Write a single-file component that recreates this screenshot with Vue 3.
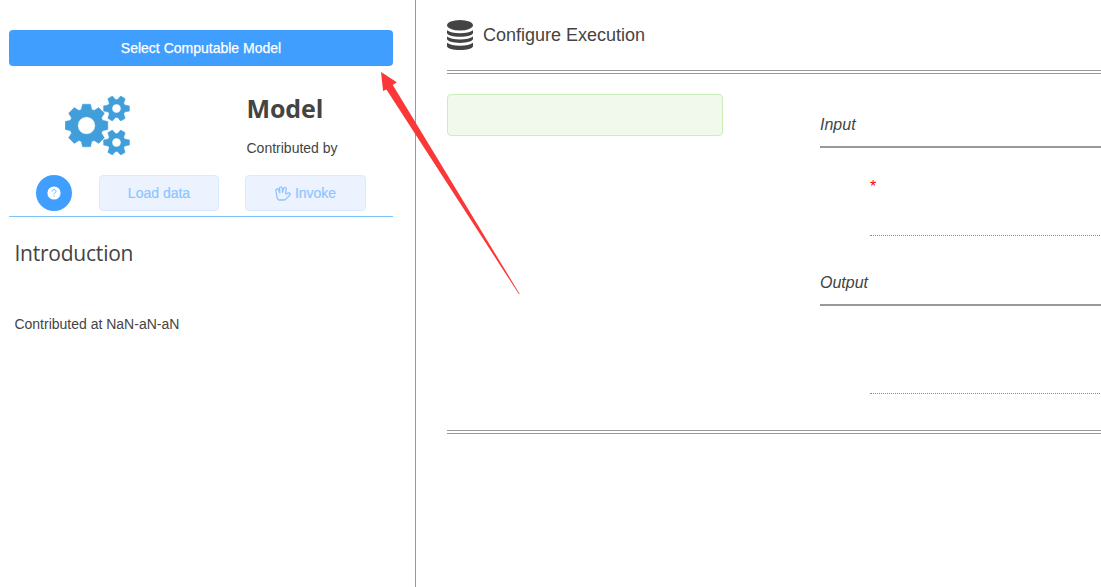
<script setup>
const gear = (cx, cy, teeth, outer, body, topHalf, baseHalf, hole) => {
  const points = []
  for (let i = 0; i < teeth; i++) {
    const a = (i * 2 * Math.PI) / teeth
    const c = Math.cos(a)
    const s = Math.sin(a)
    for (const [r, t] of [[body, -baseHalf], [outer, -topHalf], [outer, topHalf], [body, baseHalf]]) {
      points.push(`${(cx + r * c - t * s).toFixed(2)} ${(cy + r * s + t * c).toFixed(2)}`)
    }
  }
  return `M${points.join('L')}Z M${cx - hole} ${cy}a${hole} ${hole} 0 1 0 ${hole * 2} 0a${hole} ${hole} 0 1 0 ${-hole * 2} 0Z`
}
const gears = [
  gear(21.5, 29.5, 8, 21.3, 16, 4, 5.2, 8.8),
  gear(51.5, 12.5, 6, 12.9, 8.2, 2.6, 3.6, 4.5),
  gear(51.5, 46.5, 6, 12.9, 8.2, 2.6, 3.6, 4.5),
]
</script>

<template>
  <div class="page">
    <aside class="side">
      <button class="select">Select Computable Model</button>
      <div class="model">
        <svg class="gears" width="66" height="60" viewBox="0 0 66 60">
          <path v-for="(d, i) in gears" :key="i" :d="d" fill="#409eda" fill-rule="evenodd" stroke="#409eda" stroke-width=".5" stroke-linejoin="round" />
        </svg>
        <div class="summary">
          <h2>Model</h2>
          <p>Contributed by</p>
        </div>
      </div>
      <div class="actions">
        <button class="help" aria-label="Help">
          <svg width="14" height="14" viewBox="0 0 14 14">
            <circle cx="7" cy="7" r="6.6" fill="#fff" />
            <path d="M5 5.6C5 3 9 3 9 5.4C9 6.9 7 6.8 7 8.4M7 9.6V10.6" fill="none" stroke="#68b3ff" stroke-width="1" />
          </svg>
        </button>
        <button class="pale load">Load data</button>
        <button class="pale invoke">
          <svg width="16" height="15" viewBox="0 0 16 15" fill="none" stroke="#8cc5ff" stroke-width="1.3" stroke-linejoin="round" stroke-linecap="round">
            <path d="M2.3 12.4L.9 4.5C.6 2.7 2.9 2.2 3.5 3.8L4.9 7L4.4 2.6C4.3.4 6.8.3 7.1 2L7.6 6.4L8.7 2.4C9.3.6 11.5 1.3 11.2 3.1L10.6 7.2C10.7 8.3 11.7 7.9 13.1 7.1C14.8 6.3 15.8 8.1 14.6 9.2L11.6 12.4Q10.3 14 8.8 14H4.2Q2.6 14 2.3 12.4Z" />
          </svg>
          <span>Invoke</span>
        </button>
      </div>
      <section class="intro">
        <h3>Introduction</h3>
        <p>Contributed at NaN-aN-aN</p>
      </section>
    </aside>
    <main class="main">
      <header>
        <svg width="26" height="30" viewBox="0 0 26 30" fill="#444">
          <ellipse cx="13" cy="5.2" rx="13" ry="5.2" />
          <path d="M0 10.2Q4 13.2 13 13.2T26 10.2V12.7C26 18.2 0 18.2 0 12.7Z" />
          <path d="M0 16.5Q4 19.5 13 19.5T26 16.5V18.8C26 24.3 0 24.3 0 18.8Z" />
          <path d="M0 22.7Q4 25.7 13 25.7T26 22.7V26C26 31.3 0 31.3 0 26Z" />
        </svg>
        <h1>Configure Execution</h1>
      </header>
      <div class="workspace">
        <div class="state"></div>
        <div class="events">
          <section>
            <h4>Input</h4>
            <div class="event"><span>*</span></div>
          </section>
          <section>
            <h4>Output</h4>
            <div class="event"></div>
          </section>
        </div>
      </div>
    </main>
    <svg class="arrow" width="140" height="223" viewBox="0 0 140 223">
      <path d="M1 0L16.8 10.2L12.8 12.9L139.7 222L138.8 222L6.4 17.5L3.1 19Z" fill="#fb3838" />
    </svg>
  </div>
</template>

<style>
body { margin: 0; background: #fff; }
</style>

<style scoped>
.page { position: relative; display: flex; height: 587px; overflow: hidden; background: #fff; color: #444; font-family: "Liberation Sans", Arial, sans-serif; }
.page * { box-sizing: border-box; }
h1, h2, h3, h4, p { margin: 0; font-weight: 400; }
button { display: flex; align-items: center; justify-content: center; padding: 0; border: 0; font: 400 14px/1 "Liberation Sans", Arial, sans-serif; }
.side { flex: 0 0 416px; padding: 30px 22px 0 9px; border-right: 1px solid #999; }
.select { width: 384px; height: 36px; border-radius: 4px; background: #409eff; color: #fff; -webkit-text-stroke: .25px #fff; }
.model { display: flex; height: 109px; }
.gears { flex: none; margin: 30px 115.5px 0 56px; }
.summary h2 { margin-top: 23px; font: 700 25px/38px "Open Sans", sans-serif; letter-spacing: -.1px; }
.summary p { margin-top: 13px; font-size: 14px; line-height: 16px; }
.actions { display: flex; width: 384px; height: 42px; padding-left: 27px; border-bottom: 1px solid #79c3fa; }
.help { width: 36px; height: 36px; border-radius: 50%; background: #409eff; }
.pale { height: 36px; border: 1px solid #d9ecff; border-radius: 4px; background: #ecf3ff; color: #8cc5ff; -webkit-text-stroke: .2px #8cc5ff; }
.load { width: 120px; margin-left: 27px; }
.invoke { width: 121px; margin-left: 26px; gap: 4px; }
.intro { padding: 21px 0 0 5.4px; }
.intro h3 { font: 400 21px/30px "Open Sans", sans-serif; letter-spacing: -.22px; }
.intro p { margin-top: 48px; font-size: 14px; line-height: 16px; }
.main { flex: 1; min-width: 0; padding: 20px 0 0 31px; }
header { display: flex; height: 50px; }
header h1 { margin-left: 10px; font-size: 18px; line-height: 30px; }
.workspace { display: flex; height: 364px; border: 4px double #999; border-width: 4px 0; }
.state { width: 276px; height: 42px; margin-top: 20px; border: 1px solid #c9f0b8; border-radius: 4px; background: #f0f9eb; }
.events { flex: 1; margin-left: 97px; padding-top: 32px; }
.events section { height: 158px; }
h4 { height: 42px; border-bottom: 2px solid #999; font-size: 16px; font-style: italic; line-height: 37px; }
.event { height: 88px; margin: 0 1px 0 50px; padding-top: 31px; border-bottom: 1px dotted #888; color: #f00; font-size: 16px; line-height: 16px; }
.arrow { position: absolute; left: 380px; top: 72px; pointer-events: none; }
</style>
